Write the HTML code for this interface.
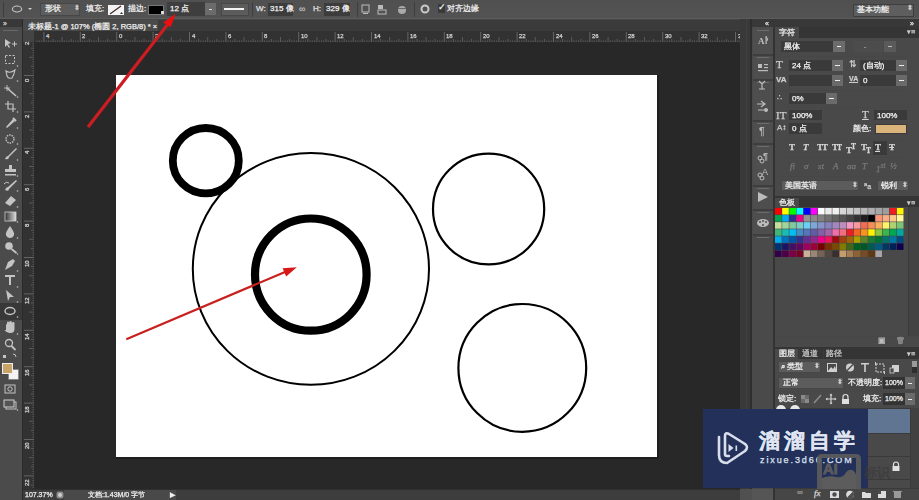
<!DOCTYPE html><html><head><meta charset="utf-8"><style>
*{margin:0;padding:0;box-sizing:border-box}
html,body{width:919px;height:500px;overflow:hidden;background:#282828;font-family:"Liberation Sans",sans-serif;color:#d8d8d8;font-size:8px}
.a{position:absolute}
.t{white-space:nowrap;line-height:1;-webkit-text-stroke:0.25px currentColor}
</style></head><body><div id="wrap" style="position:absolute;left:0;top:0;width:919px;height:500px;overflow:hidden;filter:blur(0.35px)">
<div class="a" style="left:0px;top:0px;width:919px;height:19px;background:linear-gradient(#505050,#535353);"></div>
<div class="a" style="left:0px;top:18px;width:919px;height:1px;background:#5c5c5c;"></div>
<div class="a" style="left:3px;top:2px;width:1px;height:15px;background:#3e3e3e;"></div>
<svg class="a" style="left:10px;top:4px" width="24" height="11"><ellipse cx="7" cy="5" rx="4.6" ry="3" fill="none" stroke="#c8c8c8" stroke-width="1.1"/><path d="M18 4 h4 l-2 2z" fill="#cfcfcf"/></svg>
<div class="a" style="left:40px;top:3px;width:40px;height:13px;background:#5d5d5d;border:1px solid #474747"></div>
<div class="a t" style="left:45px;top:5px;font-size:8px;color:#f0f0f0;">形状</div>
<div class="a t" style="left:74px;top:4px;font-size:7px;color:#cfcfcf;">&#x2B0D;</div>
<div class="a t" style="left:86px;top:5px;font-size:8px;color:#f0f0f0;">填充:</div>
<div class="a" style="left:108px;top:5px;width:16px;height:10px;background:#f4f4f4;"></div>
<svg class="a" style="left:108px;top:5px" width="16" height="10"><line x1="2" y1="9" x2="13" y2="1" stroke="#4a2a2a" stroke-width="1.2"/><path d="M12 9 h3 l-1.5 -2z" fill="#333"/></svg>
<div class="a t" style="left:128px;top:5px;font-size:8px;color:#f0f0f0;">描边:</div>
<div class="a" style="left:148px;top:5px;width:16px;height:10px;background:#000;border:1px solid #777"></div>
<div class="a" style="left:161px;top:11px;width:3px;height:3px;background:#ddd;"></div>
<div class="a" style="left:167px;top:2px;width:38px;height:14px;background:#3e3e3e;"></div>
<div class="a t" style="left:170px;top:5px;font-size:8px;color:#f4f4f4;">12 点</div>
<div class="a" style="left:205px;top:3px;width:11px;height:12px;background:#6b6b6b;"></div>
<div class="a" style="left:209px;top:9px;width:3px;height:1px;background:#ddd;"></div>
<div class="a" style="left:221px;top:3px;width:28px;height:13px;background:#5c5c5c;border:1px solid #474747"></div>
<div class="a" style="left:224px;top:8px;width:20px;height:2px;background:#f4f4f4;"></div>
<div class="a" style="left:252px;top:2px;width:1px;height:15px;background:#3e3e3e;"></div>
<div class="a t" style="left:256px;top:5px;font-size:8px;color:#e4e4e4;">W:</div>
<div class="a" style="left:268px;top:3px;width:25px;height:13px;background:#3c3c3c;"></div>
<div class="a t" style="left:270px;top:5px;font-size:8px;color:#f4f4f4;">315 像</div>
<div class="a t" style="left:299px;top:5px;font-size:9px;color:#bbbbbb;">&#x221E;</div>
<div class="a t" style="left:313px;top:5px;font-size:8px;color:#e4e4e4;">H:</div>
<div class="a" style="left:324px;top:3px;width:26px;height:13px;background:#3c3c3c;"></div>
<div class="a t" style="left:326px;top:5px;font-size:8px;color:#f4f4f4;">329 像</div>
<div class="a" style="left:357px;top:2px;width:1px;height:15px;background:#3e3e3e;"></div>
<svg class="a" style="left:360px;top:3px" width="50" height="14"><rect x="2" y="2" width="7" height="7" fill="none" stroke="#bbb"/><rect x="3" y="10" width="5" height="1" fill="#bbb"/><rect x="18" y="2" width="5" height="4" fill="#bbb"/><rect x="18" y="7" width="8" height="4" fill="none" stroke="#bbb"/><circle cx="42" cy="7" r="4" fill="#aaa"/><rect x="38" y="5" width="8" height="1" fill="#666"/></svg>
<div class="a" style="left:414px;top:2px;width:1px;height:15px;background:#3e3e3e;"></div>
<svg class="a" style="left:420px;top:4px" width="12" height="12"><circle cx="5" cy="5" r="3.5" fill="none" stroke="#c8c8c8" stroke-width="2"/></svg>
<div class="a" style="left:438px;top:4px;width:7px;height:9px;background:#3a3a3a;"></div>
<div class="a t" style="left:438px;top:3px;font-size:9px;color:#f0f0f0;">&#x2713;</div>
<div class="a t" style="left:447px;top:5px;font-size:8px;color:#f0f0f0;">对齐边缘</div>
<div class="a" style="left:853px;top:4px;width:61px;height:13px;background:#5e5e5e;border:1px solid #3e3e3e"></div>
<div class="a t" style="left:857px;top:6px;font-size:8px;color:#f4f4f4;">基本功能</div>
<div class="a t" style="left:907px;top:4px;font-size:7px;color:#cfcfcf;">&#x2B0D;</div>
<div class="a" style="left:0px;top:19px;width:22px;height:481px;background:#4b4b4b;"></div>
<div class="a" style="left:0px;top:19px;width:22px;height:8px;background:#383838;"></div>
<div class="a t" style="left:3px;top:20px;font-size:7px;color:#cfcfcf;">&#x00BB;</div>
<div class="a" style="left:3px;top:30px;width:15px;height:1px;background:#6a6a6a;"></div>
<div class="a" style="left:22px;top:19px;width:1px;height:481px;background:#2a2a2a;"></div>
<div class="a" style="left:0px;top:303px;width:22px;height:17px;background:#383838;"></div>
<svg class="a" style="left:0;top:0" width="22" height="420"><defs><linearGradient id="gr"><stop offset="0" stop-color="#333"/><stop offset="1" stop-color="#ddd"/></linearGradient></defs>
<path d="M5 39 l6 4 l-3 1 l2 3 l-1 1 l-2 -3 l-2 2z" fill="#c4c4c4"/><path d="M12 44 h5 M14.5 41.5 v5" stroke="#c4c4c4" fill="none" stroke-width="1"/>
<rect x="5.5" y="55.5" width="9" height="8" stroke="#c4c4c4" fill="none" stroke-dasharray="2 1.5"/><circle cx="17.5" cy="66" r="0.8" fill="#c4c4c4"/>
<path d="M6 71 q4 3 9 -1 q-1 5 -3 8 q-4 1 -5 -2 z" stroke="#c4c4c4" fill="none" stroke-width="1.1"/><circle cx="17.5" cy="81" r="0.8" fill="#c4c4c4"/>
<path d="M7 88 l9 8" stroke="#c4c4c4" fill="none" stroke-width="1.6"/><path d="M7 85 v6 M4 88 h6" stroke="#c4c4c4" fill="none" stroke-width="0.9"/><circle cx="17.5" cy="97" r="0.8" fill="#c4c4c4"/>
<path d="M8 101 v8 h8 M5 104 h8 v8" stroke="#c4c4c4" fill="none" stroke-width="1.2"/><circle cx="17.5" cy="112" r="0.8" fill="#c4c4c4"/>
<path d="M6 127 l7 -8 l2 2 l-8 7 z" fill="#c4c4c4"/><path d="M13 118 l3 3" stroke="#c4c4c4" fill="none" stroke-width="2"/><circle cx="17.5" cy="128" r="0.8" fill="#c4c4c4"/>
<circle cx="10" cy="139" r="4" stroke="#c4c4c4" fill="none" stroke-width="1.4" stroke-dasharray="1.5 1"/><circle cx="17.5" cy="144" r="0.8" fill="#c4c4c4"/>
<path d="M5 159 q1 -3 3 -3 l8 -8 l1 1 l-8 8 q0 3 -4 2z" fill="#c4c4c4"/><circle cx="17.5" cy="160" r="0.8" fill="#c4c4c4"/>
<path d="M9 165 h3 v4 h4 v3 h-11 v-3 h4z" fill="#c4c4c4"/><rect x="5" y="174" width="11" height="1.5" fill="#c4c4c4"/><circle cx="17.5" cy="176" r="0.8" fill="#c4c4c4"/>
<path d="M5 190 q1 -3 3 -3 l8 -7 l1 1 l-8 8 q0 3 -4 1z" fill="#c4c4c4"/><path d="M4 184 q2 -3 5 -1" stroke="#c4c4c4" fill="none"/><circle cx="17.5" cy="191" r="0.8" fill="#c4c4c4"/>
<path d="M5 203 l6 -7 l5 4 l-6 6 z" fill="#c4c4c4"/><circle cx="17.5" cy="207" r="0.8" fill="#c4c4c4"/>
<rect x="5" y="212" width="11" height="9" fill="url(#gr)" stroke="#cfcfcf" stroke-width="0.8"/><circle cx="17.5" cy="222" r="0.8" fill="#c4c4c4"/>
<path d="M10 226 q-5 7 -4 9 q1 3 4 3 q3 0 4 -3 q1 -2 -4 -9z" fill="#c4c4c4"/><circle cx="17.5" cy="238" r="0.8" fill="#c4c4c4"/>
<circle cx="9" cy="246" r="3.8" fill="#c4c4c4"/><path d="M11.5 249 l5 4" stroke="#c4c4c4" fill="none" stroke-width="1.8"/><circle cx="17.5" cy="254" r="0.8" fill="#c4c4c4"/>
<path d="M5 270 l3 -8 l5 -3 l2 2 l-3 5 z" fill="#c4c4c4"/><circle cx="17.5" cy="271" r="0.8" fill="#c4c4c4"/>
<path d="M5 275 h10 v2 h-4 v8 h-2 v-8 h-4z" fill="#c4c4c4"/><circle cx="17.5" cy="287" r="0.8" fill="#c4c4c4"/>
<path d="M6 290 l8 7 l-4 0 l-2 4 z" fill="#c4c4c4"/><circle cx="17.5" cy="302" r="0.8" fill="#c4c4c4"/>
<ellipse cx="10" cy="311" rx="5" ry="3.5" stroke="#c4c4c4" fill="none" stroke-width="1.4"/><circle cx="17.5" cy="317" r="0.8" fill="#c4c4c4"/>
<path d="M6 330 v-5 q0 -1 1 -1 v-2 q1 -1 2 0 v1 q0 -2 1.5 -2 q1.5 0 1.5 2 q0 -1 1.5 -1 q1 0 1 1 v6 q0 4 -4 4 h-1 q-3 0 -5 -3z" fill="#c4c4c4"/><circle cx="17.5" cy="334" r="0.8" fill="#c4c4c4"/>
<circle cx="9" cy="343" r="3.5" stroke="#c4c4c4" fill="none" stroke-width="1.3"/><path d="M11.5 346 l4 4" stroke="#c4c4c4" fill="none" stroke-width="1.8"/>
<rect x="3" y="355" width="3" height="3" fill="#c4c4c4"/><path d="M13 354 q3 0 3 3" stroke="#c4c4c4" fill="none"/>
<rect x="8.5" y="369.5" width="10" height="10" fill="#f4f4f4" stroke="#777" stroke-width="0.6"/>
<rect x="2.5" y="363.5" width="10" height="10" fill="#c9a468" stroke="#eee" stroke-width="1"/>
<rect x="5" y="385" width="10" height="8" stroke="#c4c4c4" fill="none"/><circle cx="10" cy="389" r="2.2" stroke="#c4c4c4" fill="none"/>
<rect x="6" y="402" width="10" height="7" stroke="#c4c4c4" fill="none"/><rect x="4" y="400" width="10" height="7" fill="#535353" stroke="#cfcfcf"/><circle cx="17.5" cy="410" r="0.8" fill="#c4c4c4"/>
</svg>
<div class="a" style="left:23px;top:19px;width:717px;height:12px;background:#3b3b3b;"></div>
<div class="a" style="left:23px;top:19px;width:717px;height:1px;background:#464646;"></div>
<div class="a" style="left:23px;top:20px;width:135px;height:11px;background:#4a4a4a;"></div>
<div class="a t" style="left:28px;top:23px;font-size:7.5px;color:#f0f0f0;">未标题-1 @ 107% (椭圆 2, RGB/8) * &#xD7;</div>
<div class="a" style="left:23px;top:31px;width:717px;height:11px;background:#323232;"></div>
<div class="a" style="left:23px;top:42px;width:717px;height:1px;background:#2a2a2a;"></div>
<div class="a" style="left:23px;top:31px;width:11px;height:458px;background:#323232;"></div>
<div class="a" style="left:34px;top:42px;width:1px;height:447px;background:#2a2a2a;"></div>
<div class="a" style="left:23px;top:31px;width:11px;height:11px;background:#444444;"></div>
<svg class="a" style="left:0;top:31px" width="740" height="11"><rect x="36.58" y="9.5" width="1" height="1.5" fill="#5a5a5a"/><rect x="38.85" y="9.5" width="1" height="1.5" fill="#5a5a5a"/><rect x="41.12" y="9.5" width="1" height="1.5" fill="#5a5a5a"/><rect x="43.40" y="1" width="1" height="10" fill="#646464"/><rect x="45.68" y="9.5" width="1" height="1.5" fill="#5a5a5a"/><rect x="47.95" y="9.5" width="1" height="1.5" fill="#5a5a5a"/><rect x="50.23" y="9.5" width="1" height="1.5" fill="#5a5a5a"/><rect x="52.50" y="8" width="1" height="3" fill="#5a5a5a"/><rect x="54.78" y="9.5" width="1" height="1.5" fill="#5a5a5a"/><rect x="57.05" y="9.5" width="1" height="1.5" fill="#5a5a5a"/><rect x="59.33" y="9.5" width="1" height="1.5" fill="#5a5a5a"/><rect x="61.60" y="6" width="1" height="5" fill="#5a5a5a"/><rect x="63.88" y="9.5" width="1" height="1.5" fill="#5a5a5a"/><rect x="66.15" y="9.5" width="1" height="1.5" fill="#5a5a5a"/><rect x="68.43" y="9.5" width="1" height="1.5" fill="#5a5a5a"/><rect x="70.70" y="8" width="1" height="3" fill="#5a5a5a"/><rect x="72.97" y="9.5" width="1" height="1.5" fill="#5a5a5a"/><rect x="75.25" y="9.5" width="1" height="1.5" fill="#5a5a5a"/><rect x="77.53" y="9.5" width="1" height="1.5" fill="#5a5a5a"/><rect x="79.80" y="1" width="1" height="10" fill="#646464"/><rect x="82.08" y="9.5" width="1" height="1.5" fill="#5a5a5a"/><rect x="84.35" y="9.5" width="1" height="1.5" fill="#5a5a5a"/><rect x="86.62" y="9.5" width="1" height="1.5" fill="#5a5a5a"/><rect x="88.90" y="8" width="1" height="3" fill="#5a5a5a"/><rect x="91.18" y="9.5" width="1" height="1.5" fill="#5a5a5a"/><rect x="93.45" y="9.5" width="1" height="1.5" fill="#5a5a5a"/><rect x="95.73" y="9.5" width="1" height="1.5" fill="#5a5a5a"/><rect x="98.00" y="6" width="1" height="5" fill="#5a5a5a"/><rect x="100.28" y="9.5" width="1" height="1.5" fill="#5a5a5a"/><rect x="102.55" y="9.5" width="1" height="1.5" fill="#5a5a5a"/><rect x="104.83" y="9.5" width="1" height="1.5" fill="#5a5a5a"/><rect x="107.10" y="8" width="1" height="3" fill="#5a5a5a"/><rect x="109.38" y="9.5" width="1" height="1.5" fill="#5a5a5a"/><rect x="111.65" y="9.5" width="1" height="1.5" fill="#5a5a5a"/><rect x="113.92" y="9.5" width="1" height="1.5" fill="#5a5a5a"/><rect x="116.20" y="1" width="1" height="10" fill="#646464"/><rect x="118.48" y="9.5" width="1" height="1.5" fill="#5a5a5a"/><rect x="120.75" y="9.5" width="1" height="1.5" fill="#5a5a5a"/><rect x="123.03" y="9.5" width="1" height="1.5" fill="#5a5a5a"/><rect x="125.30" y="8" width="1" height="3" fill="#5a5a5a"/><rect x="127.58" y="9.5" width="1" height="1.5" fill="#5a5a5a"/><rect x="129.85" y="9.5" width="1" height="1.5" fill="#5a5a5a"/><rect x="132.12" y="9.5" width="1" height="1.5" fill="#5a5a5a"/><rect x="134.40" y="6" width="1" height="5" fill="#5a5a5a"/><rect x="136.68" y="9.5" width="1" height="1.5" fill="#5a5a5a"/><rect x="138.95" y="9.5" width="1" height="1.5" fill="#5a5a5a"/><rect x="141.22" y="9.5" width="1" height="1.5" fill="#5a5a5a"/><rect x="143.50" y="8" width="1" height="3" fill="#5a5a5a"/><rect x="145.78" y="9.5" width="1" height="1.5" fill="#5a5a5a"/><rect x="148.05" y="9.5" width="1" height="1.5" fill="#5a5a5a"/><rect x="150.32" y="9.5" width="1" height="1.5" fill="#5a5a5a"/><rect x="152.60" y="1" width="1" height="10" fill="#646464"/><rect x="154.88" y="9.5" width="1" height="1.5" fill="#5a5a5a"/><rect x="157.15" y="9.5" width="1" height="1.5" fill="#5a5a5a"/><rect x="159.43" y="9.5" width="1" height="1.5" fill="#5a5a5a"/><rect x="161.70" y="8" width="1" height="3" fill="#5a5a5a"/><rect x="163.97" y="9.5" width="1" height="1.5" fill="#5a5a5a"/><rect x="166.25" y="9.5" width="1" height="1.5" fill="#5a5a5a"/><rect x="168.53" y="9.5" width="1" height="1.5" fill="#5a5a5a"/><rect x="170.80" y="6" width="1" height="5" fill="#5a5a5a"/><rect x="173.07" y="9.5" width="1" height="1.5" fill="#5a5a5a"/><rect x="175.35" y="9.5" width="1" height="1.5" fill="#5a5a5a"/><rect x="177.62" y="9.5" width="1" height="1.5" fill="#5a5a5a"/><rect x="179.90" y="8" width="1" height="3" fill="#5a5a5a"/><rect x="182.18" y="9.5" width="1" height="1.5" fill="#5a5a5a"/><rect x="184.45" y="9.5" width="1" height="1.5" fill="#5a5a5a"/><rect x="186.72" y="9.5" width="1" height="1.5" fill="#5a5a5a"/><rect x="189.00" y="1" width="1" height="10" fill="#646464"/><rect x="191.28" y="9.5" width="1" height="1.5" fill="#5a5a5a"/><rect x="193.55" y="9.5" width="1" height="1.5" fill="#5a5a5a"/><rect x="195.82" y="9.5" width="1" height="1.5" fill="#5a5a5a"/><rect x="198.10" y="8" width="1" height="3" fill="#5a5a5a"/><rect x="200.38" y="9.5" width="1" height="1.5" fill="#5a5a5a"/><rect x="202.65" y="9.5" width="1" height="1.5" fill="#5a5a5a"/><rect x="204.93" y="9.5" width="1" height="1.5" fill="#5a5a5a"/><rect x="207.20" y="6" width="1" height="5" fill="#5a5a5a"/><rect x="209.47" y="9.5" width="1" height="1.5" fill="#5a5a5a"/><rect x="211.75" y="9.5" width="1" height="1.5" fill="#5a5a5a"/><rect x="214.03" y="9.5" width="1" height="1.5" fill="#5a5a5a"/><rect x="216.30" y="8" width="1" height="3" fill="#5a5a5a"/><rect x="218.57" y="9.5" width="1" height="1.5" fill="#5a5a5a"/><rect x="220.85" y="9.5" width="1" height="1.5" fill="#5a5a5a"/><rect x="223.12" y="9.5" width="1" height="1.5" fill="#5a5a5a"/><rect x="225.40" y="1" width="1" height="10" fill="#646464"/><rect x="227.68" y="9.5" width="1" height="1.5" fill="#5a5a5a"/><rect x="229.95" y="9.5" width="1" height="1.5" fill="#5a5a5a"/><rect x="232.22" y="9.5" width="1" height="1.5" fill="#5a5a5a"/><rect x="234.50" y="8" width="1" height="3" fill="#5a5a5a"/><rect x="236.77" y="9.5" width="1" height="1.5" fill="#5a5a5a"/><rect x="239.05" y="9.5" width="1" height="1.5" fill="#5a5a5a"/><rect x="241.32" y="9.5" width="1" height="1.5" fill="#5a5a5a"/><rect x="243.60" y="6" width="1" height="5" fill="#5a5a5a"/><rect x="245.88" y="9.5" width="1" height="1.5" fill="#5a5a5a"/><rect x="248.15" y="9.5" width="1" height="1.5" fill="#5a5a5a"/><rect x="250.43" y="9.5" width="1" height="1.5" fill="#5a5a5a"/><rect x="252.70" y="8" width="1" height="3" fill="#5a5a5a"/><rect x="254.98" y="9.5" width="1" height="1.5" fill="#5a5a5a"/><rect x="257.25" y="9.5" width="1" height="1.5" fill="#5a5a5a"/><rect x="259.52" y="9.5" width="1" height="1.5" fill="#5a5a5a"/><rect x="261.80" y="1" width="1" height="10" fill="#646464"/><rect x="264.07" y="9.5" width="1" height="1.5" fill="#5a5a5a"/><rect x="266.35" y="9.5" width="1" height="1.5" fill="#5a5a5a"/><rect x="268.62" y="9.5" width="1" height="1.5" fill="#5a5a5a"/><rect x="270.90" y="8" width="1" height="3" fill="#5a5a5a"/><rect x="273.18" y="9.5" width="1" height="1.5" fill="#5a5a5a"/><rect x="275.45" y="9.5" width="1" height="1.5" fill="#5a5a5a"/><rect x="277.73" y="9.5" width="1" height="1.5" fill="#5a5a5a"/><rect x="280.00" y="6" width="1" height="5" fill="#5a5a5a"/><rect x="282.27" y="9.5" width="1" height="1.5" fill="#5a5a5a"/><rect x="284.55" y="9.5" width="1" height="1.5" fill="#5a5a5a"/><rect x="286.82" y="9.5" width="1" height="1.5" fill="#5a5a5a"/><rect x="289.10" y="8" width="1" height="3" fill="#5a5a5a"/><rect x="291.38" y="9.5" width="1" height="1.5" fill="#5a5a5a"/><rect x="293.65" y="9.5" width="1" height="1.5" fill="#5a5a5a"/><rect x="295.93" y="9.5" width="1" height="1.5" fill="#5a5a5a"/><rect x="298.20" y="1" width="1" height="10" fill="#646464"/><rect x="300.48" y="9.5" width="1" height="1.5" fill="#5a5a5a"/><rect x="302.75" y="9.5" width="1" height="1.5" fill="#5a5a5a"/><rect x="305.02" y="9.5" width="1" height="1.5" fill="#5a5a5a"/><rect x="307.30" y="8" width="1" height="3" fill="#5a5a5a"/><rect x="309.57" y="9.5" width="1" height="1.5" fill="#5a5a5a"/><rect x="311.85" y="9.5" width="1" height="1.5" fill="#5a5a5a"/><rect x="314.12" y="9.5" width="1" height="1.5" fill="#5a5a5a"/><rect x="316.40" y="6" width="1" height="5" fill="#5a5a5a"/><rect x="318.68" y="9.5" width="1" height="1.5" fill="#5a5a5a"/><rect x="320.95" y="9.5" width="1" height="1.5" fill="#5a5a5a"/><rect x="323.23" y="9.5" width="1" height="1.5" fill="#5a5a5a"/><rect x="325.50" y="8" width="1" height="3" fill="#5a5a5a"/><rect x="327.77" y="9.5" width="1" height="1.5" fill="#5a5a5a"/><rect x="330.05" y="9.5" width="1" height="1.5" fill="#5a5a5a"/><rect x="332.32" y="9.5" width="1" height="1.5" fill="#5a5a5a"/><rect x="334.60" y="1" width="1" height="10" fill="#646464"/><rect x="336.88" y="9.5" width="1" height="1.5" fill="#5a5a5a"/><rect x="339.15" y="9.5" width="1" height="1.5" fill="#5a5a5a"/><rect x="341.43" y="9.5" width="1" height="1.5" fill="#5a5a5a"/><rect x="343.70" y="8" width="1" height="3" fill="#5a5a5a"/><rect x="345.97" y="9.5" width="1" height="1.5" fill="#5a5a5a"/><rect x="348.25" y="9.5" width="1" height="1.5" fill="#5a5a5a"/><rect x="350.52" y="9.5" width="1" height="1.5" fill="#5a5a5a"/><rect x="352.80" y="6" width="1" height="5" fill="#5a5a5a"/><rect x="355.07" y="9.5" width="1" height="1.5" fill="#5a5a5a"/><rect x="357.35" y="9.5" width="1" height="1.5" fill="#5a5a5a"/><rect x="359.62" y="9.5" width="1" height="1.5" fill="#5a5a5a"/><rect x="361.90" y="8" width="1" height="3" fill="#5a5a5a"/><rect x="364.18" y="9.5" width="1" height="1.5" fill="#5a5a5a"/><rect x="366.45" y="9.5" width="1" height="1.5" fill="#5a5a5a"/><rect x="368.72" y="9.5" width="1" height="1.5" fill="#5a5a5a"/><rect x="371.00" y="1" width="1" height="10" fill="#646464"/><rect x="373.27" y="9.5" width="1" height="1.5" fill="#5a5a5a"/><rect x="375.55" y="9.5" width="1" height="1.5" fill="#5a5a5a"/><rect x="377.82" y="9.5" width="1" height="1.5" fill="#5a5a5a"/><rect x="380.10" y="8" width="1" height="3" fill="#5a5a5a"/><rect x="382.38" y="9.5" width="1" height="1.5" fill="#5a5a5a"/><rect x="384.65" y="9.5" width="1" height="1.5" fill="#5a5a5a"/><rect x="386.92" y="9.5" width="1" height="1.5" fill="#5a5a5a"/><rect x="389.20" y="6" width="1" height="5" fill="#5a5a5a"/><rect x="391.47" y="9.5" width="1" height="1.5" fill="#5a5a5a"/><rect x="393.75" y="9.5" width="1" height="1.5" fill="#5a5a5a"/><rect x="396.02" y="9.5" width="1" height="1.5" fill="#5a5a5a"/><rect x="398.30" y="8" width="1" height="3" fill="#5a5a5a"/><rect x="400.57" y="9.5" width="1" height="1.5" fill="#5a5a5a"/><rect x="402.85" y="9.5" width="1" height="1.5" fill="#5a5a5a"/><rect x="405.12" y="9.5" width="1" height="1.5" fill="#5a5a5a"/><rect x="407.40" y="1" width="1" height="10" fill="#646464"/><rect x="409.67" y="9.5" width="1" height="1.5" fill="#5a5a5a"/><rect x="411.95" y="9.5" width="1" height="1.5" fill="#5a5a5a"/><rect x="414.22" y="9.5" width="1" height="1.5" fill="#5a5a5a"/><rect x="416.50" y="8" width="1" height="3" fill="#5a5a5a"/><rect x="418.77" y="9.5" width="1" height="1.5" fill="#5a5a5a"/><rect x="421.05" y="9.5" width="1" height="1.5" fill="#5a5a5a"/><rect x="423.32" y="9.5" width="1" height="1.5" fill="#5a5a5a"/><rect x="425.60" y="6" width="1" height="5" fill="#5a5a5a"/><rect x="427.88" y="9.5" width="1" height="1.5" fill="#5a5a5a"/><rect x="430.15" y="9.5" width="1" height="1.5" fill="#5a5a5a"/><rect x="432.42" y="9.5" width="1" height="1.5" fill="#5a5a5a"/><rect x="434.70" y="8" width="1" height="3" fill="#5a5a5a"/><rect x="436.97" y="9.5" width="1" height="1.5" fill="#5a5a5a"/><rect x="439.25" y="9.5" width="1" height="1.5" fill="#5a5a5a"/><rect x="441.52" y="9.5" width="1" height="1.5" fill="#5a5a5a"/><rect x="443.80" y="1" width="1" height="10" fill="#646464"/><rect x="446.07" y="9.5" width="1" height="1.5" fill="#5a5a5a"/><rect x="448.35" y="9.5" width="1" height="1.5" fill="#5a5a5a"/><rect x="450.62" y="9.5" width="1" height="1.5" fill="#5a5a5a"/><rect x="452.90" y="8" width="1" height="3" fill="#5a5a5a"/><rect x="455.17" y="9.5" width="1" height="1.5" fill="#5a5a5a"/><rect x="457.45" y="9.5" width="1" height="1.5" fill="#5a5a5a"/><rect x="459.72" y="9.5" width="1" height="1.5" fill="#5a5a5a"/><rect x="462.00" y="6" width="1" height="5" fill="#5a5a5a"/><rect x="464.27" y="9.5" width="1" height="1.5" fill="#5a5a5a"/><rect x="466.55" y="9.5" width="1" height="1.5" fill="#5a5a5a"/><rect x="468.82" y="9.5" width="1" height="1.5" fill="#5a5a5a"/><rect x="471.10" y="8" width="1" height="3" fill="#5a5a5a"/><rect x="473.38" y="9.5" width="1" height="1.5" fill="#5a5a5a"/><rect x="475.65" y="9.5" width="1" height="1.5" fill="#5a5a5a"/><rect x="477.92" y="9.5" width="1" height="1.5" fill="#5a5a5a"/><rect x="480.20" y="1" width="1" height="10" fill="#646464"/><rect x="482.47" y="9.5" width="1" height="1.5" fill="#5a5a5a"/><rect x="484.75" y="9.5" width="1" height="1.5" fill="#5a5a5a"/><rect x="487.02" y="9.5" width="1" height="1.5" fill="#5a5a5a"/><rect x="489.30" y="8" width="1" height="3" fill="#5a5a5a"/><rect x="491.57" y="9.5" width="1" height="1.5" fill="#5a5a5a"/><rect x="493.85" y="9.5" width="1" height="1.5" fill="#5a5a5a"/><rect x="496.12" y="9.5" width="1" height="1.5" fill="#5a5a5a"/><rect x="498.40" y="6" width="1" height="5" fill="#5a5a5a"/><rect x="500.67" y="9.5" width="1" height="1.5" fill="#5a5a5a"/><rect x="502.95" y="9.5" width="1" height="1.5" fill="#5a5a5a"/><rect x="505.22" y="9.5" width="1" height="1.5" fill="#5a5a5a"/><rect x="507.50" y="8" width="1" height="3" fill="#5a5a5a"/><rect x="509.77" y="9.5" width="1" height="1.5" fill="#5a5a5a"/><rect x="512.05" y="9.5" width="1" height="1.5" fill="#5a5a5a"/><rect x="514.33" y="9.5" width="1" height="1.5" fill="#5a5a5a"/><rect x="516.60" y="1" width="1" height="10" fill="#646464"/><rect x="518.88" y="9.5" width="1" height="1.5" fill="#5a5a5a"/><rect x="521.15" y="9.5" width="1" height="1.5" fill="#5a5a5a"/><rect x="523.42" y="9.5" width="1" height="1.5" fill="#5a5a5a"/><rect x="525.70" y="8" width="1" height="3" fill="#5a5a5a"/><rect x="527.98" y="9.5" width="1" height="1.5" fill="#5a5a5a"/><rect x="530.25" y="9.5" width="1" height="1.5" fill="#5a5a5a"/><rect x="532.52" y="9.5" width="1" height="1.5" fill="#5a5a5a"/><rect x="534.80" y="6" width="1" height="5" fill="#5a5a5a"/><rect x="537.08" y="9.5" width="1" height="1.5" fill="#5a5a5a"/><rect x="539.35" y="9.5" width="1" height="1.5" fill="#5a5a5a"/><rect x="541.62" y="9.5" width="1" height="1.5" fill="#5a5a5a"/><rect x="543.90" y="8" width="1" height="3" fill="#5a5a5a"/><rect x="546.17" y="9.5" width="1" height="1.5" fill="#5a5a5a"/><rect x="548.45" y="9.5" width="1" height="1.5" fill="#5a5a5a"/><rect x="550.73" y="9.5" width="1" height="1.5" fill="#5a5a5a"/><rect x="553.00" y="1" width="1" height="10" fill="#646464"/><rect x="555.27" y="9.5" width="1" height="1.5" fill="#5a5a5a"/><rect x="557.55" y="9.5" width="1" height="1.5" fill="#5a5a5a"/><rect x="559.83" y="9.5" width="1" height="1.5" fill="#5a5a5a"/><rect x="562.10" y="8" width="1" height="3" fill="#5a5a5a"/><rect x="564.38" y="9.5" width="1" height="1.5" fill="#5a5a5a"/><rect x="566.65" y="9.5" width="1" height="1.5" fill="#5a5a5a"/><rect x="568.92" y="9.5" width="1" height="1.5" fill="#5a5a5a"/><rect x="571.20" y="6" width="1" height="5" fill="#5a5a5a"/><rect x="573.48" y="9.5" width="1" height="1.5" fill="#5a5a5a"/><rect x="575.75" y="9.5" width="1" height="1.5" fill="#5a5a5a"/><rect x="578.02" y="9.5" width="1" height="1.5" fill="#5a5a5a"/><rect x="580.30" y="8" width="1" height="3" fill="#5a5a5a"/><rect x="582.58" y="9.5" width="1" height="1.5" fill="#5a5a5a"/><rect x="584.85" y="9.5" width="1" height="1.5" fill="#5a5a5a"/><rect x="587.12" y="9.5" width="1" height="1.5" fill="#5a5a5a"/><rect x="589.40" y="1" width="1" height="10" fill="#646464"/><rect x="591.67" y="9.5" width="1" height="1.5" fill="#5a5a5a"/><rect x="593.95" y="9.5" width="1" height="1.5" fill="#5a5a5a"/><rect x="596.23" y="9.5" width="1" height="1.5" fill="#5a5a5a"/><rect x="598.50" y="8" width="1" height="3" fill="#5a5a5a"/><rect x="600.77" y="9.5" width="1" height="1.5" fill="#5a5a5a"/><rect x="603.05" y="9.5" width="1" height="1.5" fill="#5a5a5a"/><rect x="605.33" y="9.5" width="1" height="1.5" fill="#5a5a5a"/><rect x="607.60" y="6" width="1" height="5" fill="#5a5a5a"/><rect x="609.88" y="9.5" width="1" height="1.5" fill="#5a5a5a"/><rect x="612.15" y="9.5" width="1" height="1.5" fill="#5a5a5a"/><rect x="614.42" y="9.5" width="1" height="1.5" fill="#5a5a5a"/><rect x="616.70" y="8" width="1" height="3" fill="#5a5a5a"/><rect x="618.98" y="9.5" width="1" height="1.5" fill="#5a5a5a"/><rect x="621.25" y="9.5" width="1" height="1.5" fill="#5a5a5a"/><rect x="623.52" y="9.5" width="1" height="1.5" fill="#5a5a5a"/><rect x="625.80" y="1" width="1" height="10" fill="#646464"/><rect x="628.08" y="9.5" width="1" height="1.5" fill="#5a5a5a"/><rect x="630.35" y="9.5" width="1" height="1.5" fill="#5a5a5a"/><rect x="632.62" y="9.5" width="1" height="1.5" fill="#5a5a5a"/><rect x="634.90" y="8" width="1" height="3" fill="#5a5a5a"/><rect x="637.18" y="9.5" width="1" height="1.5" fill="#5a5a5a"/><rect x="639.45" y="9.5" width="1" height="1.5" fill="#5a5a5a"/><rect x="641.73" y="9.5" width="1" height="1.5" fill="#5a5a5a"/><rect x="644.00" y="6" width="1" height="5" fill="#5a5a5a"/><rect x="646.27" y="9.5" width="1" height="1.5" fill="#5a5a5a"/><rect x="648.55" y="9.5" width="1" height="1.5" fill="#5a5a5a"/><rect x="650.83" y="9.5" width="1" height="1.5" fill="#5a5a5a"/><rect x="653.10" y="8" width="1" height="3" fill="#5a5a5a"/><rect x="655.38" y="9.5" width="1" height="1.5" fill="#5a5a5a"/><rect x="657.65" y="9.5" width="1" height="1.5" fill="#5a5a5a"/><rect x="659.93" y="9.5" width="1" height="1.5" fill="#5a5a5a"/><rect x="662.20" y="1" width="1" height="10" fill="#646464"/><rect x="664.48" y="9.5" width="1" height="1.5" fill="#5a5a5a"/><rect x="666.75" y="9.5" width="1" height="1.5" fill="#5a5a5a"/><rect x="669.02" y="9.5" width="1" height="1.5" fill="#5a5a5a"/><rect x="671.30" y="8" width="1" height="3" fill="#5a5a5a"/><rect x="673.58" y="9.5" width="1" height="1.5" fill="#5a5a5a"/><rect x="675.85" y="9.5" width="1" height="1.5" fill="#5a5a5a"/><rect x="678.12" y="9.5" width="1" height="1.5" fill="#5a5a5a"/><rect x="680.40" y="6" width="1" height="5" fill="#5a5a5a"/><rect x="682.68" y="9.5" width="1" height="1.5" fill="#5a5a5a"/><rect x="684.95" y="9.5" width="1" height="1.5" fill="#5a5a5a"/><rect x="687.23" y="9.5" width="1" height="1.5" fill="#5a5a5a"/><rect x="689.50" y="8" width="1" height="3" fill="#5a5a5a"/><rect x="691.77" y="9.5" width="1" height="1.5" fill="#5a5a5a"/><rect x="694.05" y="9.5" width="1" height="1.5" fill="#5a5a5a"/><rect x="696.33" y="9.5" width="1" height="1.5" fill="#5a5a5a"/><rect x="698.60" y="1" width="1" height="10" fill="#646464"/><rect x="700.88" y="9.5" width="1" height="1.5" fill="#5a5a5a"/><rect x="703.15" y="9.5" width="1" height="1.5" fill="#5a5a5a"/><rect x="705.43" y="9.5" width="1" height="1.5" fill="#5a5a5a"/><rect x="707.70" y="8" width="1" height="3" fill="#5a5a5a"/><rect x="709.98" y="9.5" width="1" height="1.5" fill="#5a5a5a"/><rect x="712.25" y="9.5" width="1" height="1.5" fill="#5a5a5a"/><rect x="714.52" y="9.5" width="1" height="1.5" fill="#5a5a5a"/><rect x="716.80" y="6" width="1" height="5" fill="#5a5a5a"/><rect x="719.08" y="9.5" width="1" height="1.5" fill="#5a5a5a"/><rect x="721.35" y="9.5" width="1" height="1.5" fill="#5a5a5a"/><rect x="723.62" y="9.5" width="1" height="1.5" fill="#5a5a5a"/><rect x="725.90" y="8" width="1" height="3" fill="#5a5a5a"/><rect x="728.18" y="9.5" width="1" height="1.5" fill="#5a5a5a"/><rect x="730.45" y="9.5" width="1" height="1.5" fill="#5a5a5a"/><rect x="732.73" y="9.5" width="1" height="1.5" fill="#5a5a5a"/><rect x="735.00" y="1" width="1" height="10" fill="#646464"/><rect x="737.27" y="9.5" width="1" height="1.5" fill="#5a5a5a"/><rect x="739.55" y="9.5" width="1" height="1.5" fill="#5a5a5a"/></svg>
<div class="a t" style="left:46px;top:33px;font-size:6px;color:#d4d4d4;">4</div>
<div class="a t" style="left:82px;top:33px;font-size:6px;color:#d4d4d4;">2</div>
<div class="a t" style="left:119px;top:33px;font-size:6px;color:#d4d4d4;">0</div>
<div class="a t" style="left:155px;top:33px;font-size:6px;color:#d4d4d4;">2</div>
<div class="a t" style="left:192px;top:33px;font-size:6px;color:#d4d4d4;">4</div>
<div class="a t" style="left:228px;top:33px;font-size:6px;color:#d4d4d4;">6</div>
<div class="a t" style="left:264px;top:33px;font-size:6px;color:#d4d4d4;">8</div>
<div class="a t" style="left:301px;top:33px;font-size:6px;color:#d4d4d4;">10</div>
<div class="a t" style="left:337px;top:33px;font-size:6px;color:#d4d4d4;">12</div>
<div class="a t" style="left:374px;top:33px;font-size:6px;color:#d4d4d4;">14</div>
<div class="a t" style="left:410px;top:33px;font-size:6px;color:#d4d4d4;">16</div>
<div class="a t" style="left:446px;top:33px;font-size:6px;color:#d4d4d4;">18</div>
<div class="a t" style="left:483px;top:33px;font-size:6px;color:#d4d4d4;">20</div>
<div class="a t" style="left:519px;top:33px;font-size:6px;color:#d4d4d4;">22</div>
<div class="a t" style="left:556px;top:33px;font-size:6px;color:#d4d4d4;">24</div>
<div class="a t" style="left:592px;top:33px;font-size:6px;color:#d4d4d4;">26</div>
<div class="a t" style="left:628px;top:33px;font-size:6px;color:#d4d4d4;">28</div>
<div class="a t" style="left:665px;top:33px;font-size:6px;color:#d4d4d4;">30</div>
<div class="a t" style="left:701px;top:33px;font-size:6px;color:#d4d4d4;">32</div>
<div class="a t" style="left:738px;top:33px;font-size:6px;color:#d4d4d4;">34</div>
<svg class="a" style="left:23px;top:0" width="11" height="489"><rect x="9.5" y="43.15" width="1.5" height="1" fill="#5a5a5a"/><rect x="9.5" y="45.42" width="1.5" height="1" fill="#5a5a5a"/><rect x="8" y="47.70" width="3" height="1" fill="#5a5a5a"/><rect x="9.5" y="49.98" width="1.5" height="1" fill="#5a5a5a"/><rect x="9.5" y="52.25" width="1.5" height="1" fill="#5a5a5a"/><rect x="9.5" y="54.53" width="1.5" height="1" fill="#5a5a5a"/><rect x="6" y="56.80" width="5" height="1" fill="#5a5a5a"/><rect x="9.5" y="59.08" width="1.5" height="1" fill="#5a5a5a"/><rect x="9.5" y="61.35" width="1.5" height="1" fill="#5a5a5a"/><rect x="9.5" y="63.62" width="1.5" height="1" fill="#5a5a5a"/><rect x="8" y="65.90" width="3" height="1" fill="#5a5a5a"/><rect x="9.5" y="68.17" width="1.5" height="1" fill="#5a5a5a"/><rect x="9.5" y="70.45" width="1.5" height="1" fill="#5a5a5a"/><rect x="9.5" y="72.72" width="1.5" height="1" fill="#5a5a5a"/><rect x="1" y="75.00" width="10" height="1" fill="#646464"/><rect x="9.5" y="77.28" width="1.5" height="1" fill="#5a5a5a"/><rect x="9.5" y="79.55" width="1.5" height="1" fill="#5a5a5a"/><rect x="9.5" y="81.83" width="1.5" height="1" fill="#5a5a5a"/><rect x="8" y="84.10" width="3" height="1" fill="#5a5a5a"/><rect x="9.5" y="86.38" width="1.5" height="1" fill="#5a5a5a"/><rect x="9.5" y="88.65" width="1.5" height="1" fill="#5a5a5a"/><rect x="9.5" y="90.92" width="1.5" height="1" fill="#5a5a5a"/><rect x="6" y="93.20" width="5" height="1" fill="#5a5a5a"/><rect x="9.5" y="95.47" width="1.5" height="1" fill="#5a5a5a"/><rect x="9.5" y="97.75" width="1.5" height="1" fill="#5a5a5a"/><rect x="9.5" y="100.03" width="1.5" height="1" fill="#5a5a5a"/><rect x="8" y="102.30" width="3" height="1" fill="#5a5a5a"/><rect x="9.5" y="104.58" width="1.5" height="1" fill="#5a5a5a"/><rect x="9.5" y="106.85" width="1.5" height="1" fill="#5a5a5a"/><rect x="9.5" y="109.12" width="1.5" height="1" fill="#5a5a5a"/><rect x="1" y="111.40" width="10" height="1" fill="#646464"/><rect x="9.5" y="113.67" width="1.5" height="1" fill="#5a5a5a"/><rect x="9.5" y="115.95" width="1.5" height="1" fill="#5a5a5a"/><rect x="9.5" y="118.22" width="1.5" height="1" fill="#5a5a5a"/><rect x="8" y="120.50" width="3" height="1" fill="#5a5a5a"/><rect x="9.5" y="122.78" width="1.5" height="1" fill="#5a5a5a"/><rect x="9.5" y="125.05" width="1.5" height="1" fill="#5a5a5a"/><rect x="9.5" y="127.32" width="1.5" height="1" fill="#5a5a5a"/><rect x="6" y="129.60" width="5" height="1" fill="#5a5a5a"/><rect x="9.5" y="131.88" width="1.5" height="1" fill="#5a5a5a"/><rect x="9.5" y="134.15" width="1.5" height="1" fill="#5a5a5a"/><rect x="9.5" y="136.43" width="1.5" height="1" fill="#5a5a5a"/><rect x="8" y="138.70" width="3" height="1" fill="#5a5a5a"/><rect x="9.5" y="140.97" width="1.5" height="1" fill="#5a5a5a"/><rect x="9.5" y="143.25" width="1.5" height="1" fill="#5a5a5a"/><rect x="9.5" y="145.52" width="1.5" height="1" fill="#5a5a5a"/><rect x="1" y="147.80" width="10" height="1" fill="#646464"/><rect x="9.5" y="150.07" width="1.5" height="1" fill="#5a5a5a"/><rect x="9.5" y="152.35" width="1.5" height="1" fill="#5a5a5a"/><rect x="9.5" y="154.62" width="1.5" height="1" fill="#5a5a5a"/><rect x="8" y="156.90" width="3" height="1" fill="#5a5a5a"/><rect x="9.5" y="159.18" width="1.5" height="1" fill="#5a5a5a"/><rect x="9.5" y="161.45" width="1.5" height="1" fill="#5a5a5a"/><rect x="9.5" y="163.72" width="1.5" height="1" fill="#5a5a5a"/><rect x="6" y="166.00" width="5" height="1" fill="#5a5a5a"/><rect x="9.5" y="168.27" width="1.5" height="1" fill="#5a5a5a"/><rect x="9.5" y="170.55" width="1.5" height="1" fill="#5a5a5a"/><rect x="9.5" y="172.82" width="1.5" height="1" fill="#5a5a5a"/><rect x="8" y="175.10" width="3" height="1" fill="#5a5a5a"/><rect x="9.5" y="177.38" width="1.5" height="1" fill="#5a5a5a"/><rect x="9.5" y="179.65" width="1.5" height="1" fill="#5a5a5a"/><rect x="9.5" y="181.93" width="1.5" height="1" fill="#5a5a5a"/><rect x="1" y="184.20" width="10" height="1" fill="#646464"/><rect x="9.5" y="186.47" width="1.5" height="1" fill="#5a5a5a"/><rect x="9.5" y="188.75" width="1.5" height="1" fill="#5a5a5a"/><rect x="9.5" y="191.02" width="1.5" height="1" fill="#5a5a5a"/><rect x="8" y="193.30" width="3" height="1" fill="#5a5a5a"/><rect x="9.5" y="195.57" width="1.5" height="1" fill="#5a5a5a"/><rect x="9.5" y="197.85" width="1.5" height="1" fill="#5a5a5a"/><rect x="9.5" y="200.12" width="1.5" height="1" fill="#5a5a5a"/><rect x="6" y="202.40" width="5" height="1" fill="#5a5a5a"/><rect x="9.5" y="204.67" width="1.5" height="1" fill="#5a5a5a"/><rect x="9.5" y="206.95" width="1.5" height="1" fill="#5a5a5a"/><rect x="9.5" y="209.22" width="1.5" height="1" fill="#5a5a5a"/><rect x="8" y="211.50" width="3" height="1" fill="#5a5a5a"/><rect x="9.5" y="213.78" width="1.5" height="1" fill="#5a5a5a"/><rect x="9.5" y="216.05" width="1.5" height="1" fill="#5a5a5a"/><rect x="9.5" y="218.32" width="1.5" height="1" fill="#5a5a5a"/><rect x="1" y="220.60" width="10" height="1" fill="#646464"/><rect x="9.5" y="222.88" width="1.5" height="1" fill="#5a5a5a"/><rect x="9.5" y="225.15" width="1.5" height="1" fill="#5a5a5a"/><rect x="9.5" y="227.42" width="1.5" height="1" fill="#5a5a5a"/><rect x="8" y="229.70" width="3" height="1" fill="#5a5a5a"/><rect x="9.5" y="231.97" width="1.5" height="1" fill="#5a5a5a"/><rect x="9.5" y="234.25" width="1.5" height="1" fill="#5a5a5a"/><rect x="9.5" y="236.53" width="1.5" height="1" fill="#5a5a5a"/><rect x="6" y="238.80" width="5" height="1" fill="#5a5a5a"/><rect x="9.5" y="241.07" width="1.5" height="1" fill="#5a5a5a"/><rect x="9.5" y="243.35" width="1.5" height="1" fill="#5a5a5a"/><rect x="9.5" y="245.62" width="1.5" height="1" fill="#5a5a5a"/><rect x="8" y="247.90" width="3" height="1" fill="#5a5a5a"/><rect x="9.5" y="250.17" width="1.5" height="1" fill="#5a5a5a"/><rect x="9.5" y="252.45" width="1.5" height="1" fill="#5a5a5a"/><rect x="9.5" y="254.72" width="1.5" height="1" fill="#5a5a5a"/><rect x="1" y="257.00" width="10" height="1" fill="#646464"/><rect x="9.5" y="259.27" width="1.5" height="1" fill="#5a5a5a"/><rect x="9.5" y="261.55" width="1.5" height="1" fill="#5a5a5a"/><rect x="9.5" y="263.82" width="1.5" height="1" fill="#5a5a5a"/><rect x="8" y="266.10" width="3" height="1" fill="#5a5a5a"/><rect x="9.5" y="268.38" width="1.5" height="1" fill="#5a5a5a"/><rect x="9.5" y="270.65" width="1.5" height="1" fill="#5a5a5a"/><rect x="9.5" y="272.92" width="1.5" height="1" fill="#5a5a5a"/><rect x="6" y="275.20" width="5" height="1" fill="#5a5a5a"/><rect x="9.5" y="277.48" width="1.5" height="1" fill="#5a5a5a"/><rect x="9.5" y="279.75" width="1.5" height="1" fill="#5a5a5a"/><rect x="9.5" y="282.02" width="1.5" height="1" fill="#5a5a5a"/><rect x="8" y="284.30" width="3" height="1" fill="#5a5a5a"/><rect x="9.5" y="286.57" width="1.5" height="1" fill="#5a5a5a"/><rect x="9.5" y="288.85" width="1.5" height="1" fill="#5a5a5a"/><rect x="9.5" y="291.12" width="1.5" height="1" fill="#5a5a5a"/><rect x="1" y="293.40" width="10" height="1" fill="#646464"/><rect x="9.5" y="295.67" width="1.5" height="1" fill="#5a5a5a"/><rect x="9.5" y="297.95" width="1.5" height="1" fill="#5a5a5a"/><rect x="9.5" y="300.23" width="1.5" height="1" fill="#5a5a5a"/><rect x="8" y="302.50" width="3" height="1" fill="#5a5a5a"/><rect x="9.5" y="304.77" width="1.5" height="1" fill="#5a5a5a"/><rect x="9.5" y="307.05" width="1.5" height="1" fill="#5a5a5a"/><rect x="9.5" y="309.32" width="1.5" height="1" fill="#5a5a5a"/><rect x="6" y="311.60" width="5" height="1" fill="#5a5a5a"/><rect x="9.5" y="313.88" width="1.5" height="1" fill="#5a5a5a"/><rect x="9.5" y="316.15" width="1.5" height="1" fill="#5a5a5a"/><rect x="9.5" y="318.42" width="1.5" height="1" fill="#5a5a5a"/><rect x="8" y="320.70" width="3" height="1" fill="#5a5a5a"/><rect x="9.5" y="322.98" width="1.5" height="1" fill="#5a5a5a"/><rect x="9.5" y="325.25" width="1.5" height="1" fill="#5a5a5a"/><rect x="9.5" y="327.52" width="1.5" height="1" fill="#5a5a5a"/><rect x="1" y="329.80" width="10" height="1" fill="#646464"/><rect x="9.5" y="332.07" width="1.5" height="1" fill="#5a5a5a"/><rect x="9.5" y="334.35" width="1.5" height="1" fill="#5a5a5a"/><rect x="9.5" y="336.62" width="1.5" height="1" fill="#5a5a5a"/><rect x="8" y="338.90" width="3" height="1" fill="#5a5a5a"/><rect x="9.5" y="341.18" width="1.5" height="1" fill="#5a5a5a"/><rect x="9.5" y="343.45" width="1.5" height="1" fill="#5a5a5a"/><rect x="9.5" y="345.72" width="1.5" height="1" fill="#5a5a5a"/><rect x="6" y="348.00" width="5" height="1" fill="#5a5a5a"/><rect x="9.5" y="350.27" width="1.5" height="1" fill="#5a5a5a"/><rect x="9.5" y="352.55" width="1.5" height="1" fill="#5a5a5a"/><rect x="9.5" y="354.82" width="1.5" height="1" fill="#5a5a5a"/><rect x="8" y="357.10" width="3" height="1" fill="#5a5a5a"/><rect x="9.5" y="359.38" width="1.5" height="1" fill="#5a5a5a"/><rect x="9.5" y="361.65" width="1.5" height="1" fill="#5a5a5a"/><rect x="9.5" y="363.93" width="1.5" height="1" fill="#5a5a5a"/><rect x="1" y="366.20" width="10" height="1" fill="#646464"/><rect x="9.5" y="368.47" width="1.5" height="1" fill="#5a5a5a"/><rect x="9.5" y="370.75" width="1.5" height="1" fill="#5a5a5a"/><rect x="9.5" y="373.02" width="1.5" height="1" fill="#5a5a5a"/><rect x="8" y="375.30" width="3" height="1" fill="#5a5a5a"/><rect x="9.5" y="377.57" width="1.5" height="1" fill="#5a5a5a"/><rect x="9.5" y="379.85" width="1.5" height="1" fill="#5a5a5a"/><rect x="9.5" y="382.12" width="1.5" height="1" fill="#5a5a5a"/><rect x="6" y="384.40" width="5" height="1" fill="#5a5a5a"/><rect x="9.5" y="386.68" width="1.5" height="1" fill="#5a5a5a"/><rect x="9.5" y="388.95" width="1.5" height="1" fill="#5a5a5a"/><rect x="9.5" y="391.22" width="1.5" height="1" fill="#5a5a5a"/><rect x="8" y="393.50" width="3" height="1" fill="#5a5a5a"/><rect x="9.5" y="395.77" width="1.5" height="1" fill="#5a5a5a"/><rect x="9.5" y="398.05" width="1.5" height="1" fill="#5a5a5a"/><rect x="9.5" y="400.32" width="1.5" height="1" fill="#5a5a5a"/><rect x="1" y="402.60" width="10" height="1" fill="#646464"/><rect x="9.5" y="404.88" width="1.5" height="1" fill="#5a5a5a"/><rect x="9.5" y="407.15" width="1.5" height="1" fill="#5a5a5a"/><rect x="9.5" y="409.43" width="1.5" height="1" fill="#5a5a5a"/><rect x="8" y="411.70" width="3" height="1" fill="#5a5a5a"/><rect x="9.5" y="413.97" width="1.5" height="1" fill="#5a5a5a"/><rect x="9.5" y="416.25" width="1.5" height="1" fill="#5a5a5a"/><rect x="9.5" y="418.52" width="1.5" height="1" fill="#5a5a5a"/><rect x="6" y="420.80" width="5" height="1" fill="#5a5a5a"/><rect x="9.5" y="423.07" width="1.5" height="1" fill="#5a5a5a"/><rect x="9.5" y="425.35" width="1.5" height="1" fill="#5a5a5a"/><rect x="9.5" y="427.62" width="1.5" height="1" fill="#5a5a5a"/><rect x="8" y="429.90" width="3" height="1" fill="#5a5a5a"/><rect x="9.5" y="432.18" width="1.5" height="1" fill="#5a5a5a"/><rect x="9.5" y="434.45" width="1.5" height="1" fill="#5a5a5a"/><rect x="9.5" y="436.72" width="1.5" height="1" fill="#5a5a5a"/><rect x="1" y="439.00" width="10" height="1" fill="#646464"/><rect x="9.5" y="441.27" width="1.5" height="1" fill="#5a5a5a"/><rect x="9.5" y="443.55" width="1.5" height="1" fill="#5a5a5a"/><rect x="9.5" y="445.82" width="1.5" height="1" fill="#5a5a5a"/><rect x="8" y="448.10" width="3" height="1" fill="#5a5a5a"/><rect x="9.5" y="450.38" width="1.5" height="1" fill="#5a5a5a"/><rect x="9.5" y="452.65" width="1.5" height="1" fill="#5a5a5a"/><rect x="9.5" y="454.93" width="1.5" height="1" fill="#5a5a5a"/><rect x="6" y="457.20" width="5" height="1" fill="#5a5a5a"/><rect x="9.5" y="459.47" width="1.5" height="1" fill="#5a5a5a"/><rect x="9.5" y="461.75" width="1.5" height="1" fill="#5a5a5a"/><rect x="9.5" y="464.02" width="1.5" height="1" fill="#5a5a5a"/><rect x="8" y="466.30" width="3" height="1" fill="#5a5a5a"/><rect x="9.5" y="468.57" width="1.5" height="1" fill="#5a5a5a"/><rect x="9.5" y="470.85" width="1.5" height="1" fill="#5a5a5a"/><rect x="9.5" y="473.12" width="1.5" height="1" fill="#5a5a5a"/><rect x="1" y="475.40" width="10" height="1" fill="#646464"/><rect x="9.5" y="477.68" width="1.5" height="1" fill="#5a5a5a"/><rect x="9.5" y="479.95" width="1.5" height="1" fill="#5a5a5a"/><rect x="9.5" y="482.22" width="1.5" height="1" fill="#5a5a5a"/><rect x="8" y="484.50" width="3" height="1" fill="#5a5a5a"/><rect x="9.5" y="486.77" width="1.5" height="1" fill="#5a5a5a"/></svg>
<div class="a t" style="left:24px;top:45.2px;font-size:6px;color:#d4d4d4;transform:rotate(-90deg);transform-origin:0 0">2</div>
<div class="a t" style="left:24px;top:81.6px;font-size:6px;color:#d4d4d4;transform:rotate(-90deg);transform-origin:0 0">0</div>
<div class="a t" style="left:24px;top:118.0px;font-size:6px;color:#d4d4d4;transform:rotate(-90deg);transform-origin:0 0">2</div>
<div class="a t" style="left:24px;top:154.4px;font-size:6px;color:#d4d4d4;transform:rotate(-90deg);transform-origin:0 0">4</div>
<div class="a t" style="left:24px;top:190.8px;font-size:6px;color:#d4d4d4;transform:rotate(-90deg);transform-origin:0 0">6</div>
<div class="a t" style="left:24px;top:227.2px;font-size:6px;color:#d4d4d4;transform:rotate(-90deg);transform-origin:0 0">8</div>
<div class="a t" style="left:24px;top:267.2px;font-size:6px;color:#d4d4d4;transform:rotate(-90deg);transform-origin:0 0">10</div>
<div class="a t" style="left:24px;top:303.6px;font-size:6px;color:#d4d4d4;transform:rotate(-90deg);transform-origin:0 0">12</div>
<div class="a t" style="left:24px;top:340.0px;font-size:6px;color:#d4d4d4;transform:rotate(-90deg);transform-origin:0 0">14</div>
<div class="a t" style="left:24px;top:376.4px;font-size:6px;color:#d4d4d4;transform:rotate(-90deg);transform-origin:0 0">16</div>
<div class="a t" style="left:24px;top:412.8px;font-size:6px;color:#d4d4d4;transform:rotate(-90deg);transform-origin:0 0">18</div>
<div class="a t" style="left:24px;top:449.2px;font-size:6px;color:#d4d4d4;transform:rotate(-90deg);transform-origin:0 0">20</div>
<div class="a t" style="left:24px;top:485.6px;font-size:6px;color:#d4d4d4;transform:rotate(-90deg);transform-origin:0 0">22</div>
<div class="a" style="left:23px;top:489px;width:717px;height:11px;background:#3d3d3d;"></div>
<div class="a" style="left:23px;top:489px;width:717px;height:1px;background:#2e2e2e;"></div>
<div class="a" style="left:64px;top:490px;width:112px;height:10px;background:#494949;"></div>
<div class="a t" style="left:25px;top:491px;font-size:7px;color:#f0f0f0;">107.37%</div>
<svg class="a" style="left:56px;top:491px" width="8" height="8"><rect x="0.5" y="0.5" width="7" height="7" rx="2" fill="#8a8a8a"/><circle cx="4" cy="4" r="2" fill="#d0d0d0"/></svg>
<div class="a t" style="left:88px;top:491px;font-size:7px;color:#f0f0f0;">文档:1.43M/0 字节</div>
<div class="a t" style="left:170px;top:491px;font-size:7px;color:#f0f0f0;">&#x25B6;</div>
<div class="a" style="left:116px;top:75px;width:541px;height:382px;background:#ffffff;box-shadow:1px 1px 0 1px #1e1e1e"></div>
<svg class="a" style="left:0;top:0" width="919" height="500">
  <ellipse cx="205.8" cy="160.7" rx="33" ry="32.7" fill="none" stroke="#000" stroke-width="7.8"/>
  <ellipse cx="310.9" cy="268.9" rx="118.1" ry="115.9" fill="none" stroke="#000" stroke-width="2"/>
  <ellipse cx="310.8" cy="274.6" rx="55.8" ry="56.1" fill="none" stroke="#000" stroke-width="8.2"/>
  <ellipse cx="488.6" cy="209" rx="55.6" ry="55.4" fill="none" stroke="#000" stroke-width="2.2"/>
  <ellipse cx="522.3" cy="367.9" rx="63.9" ry="63.9" fill="none" stroke="#000" stroke-width="2.2"/>
</svg>
<div class="a" style="left:740px;top:19px;width:179px;height:481px;background:#494949;"></div>
<div class="a" style="left:740px;top:19px;width:12px;height:481px;background:#393939;"></div>
<div class="a" style="left:746px;top:19px;width:1px;height:481px;background:#404040;"></div>
<div class="a" style="left:750px;top:19px;width:2px;height:481px;background:#2e2e2e;"></div>
<div class="a" style="left:752px;top:19px;width:167px;height:8px;background:#383838;"></div>
<div class="a t" style="left:765px;top:20px;font-size:7px;color:#e4e4e4;">&#x00AB;</div>
<div class="a t" style="left:910px;top:20px;font-size:7px;color:#e4e4e4;">&#x00BB;</div>
<div class="a" style="left:752px;top:27px;width:21px;height:473px;background:#4a4a4a;"></div>
<div class="a" style="left:773px;top:27px;width:2px;height:473px;background:#333333;"></div>
<div class="a" style="left:753px;top:27px;width:20px;height:208px;background:#4e4e4e;"></div>
<div class="a" style="left:753px;top:54px;width:20px;height:2px;background:#3e3e3e;"></div>
<div class="a" style="left:757px;top:57px;width:12px;height:1px;background:#6c6c6c;"></div>
<div class="a" style="left:753px;top:79px;width:20px;height:2px;background:#3e3e3e;"></div>
<div class="a" style="left:757px;top:82px;width:12px;height:1px;background:#6c6c6c;"></div>
<div class="a" style="left:753px;top:120px;width:20px;height:2px;background:#3e3e3e;"></div>
<div class="a" style="left:757px;top:123px;width:12px;height:1px;background:#6c6c6c;"></div>
<div class="a" style="left:753px;top:143px;width:20px;height:2px;background:#3e3e3e;"></div>
<div class="a" style="left:757px;top:146px;width:12px;height:1px;background:#6c6c6c;"></div>
<div class="a" style="left:753px;top:185px;width:20px;height:2px;background:#3e3e3e;"></div>
<div class="a" style="left:757px;top:188px;width:12px;height:1px;background:#6c6c6c;"></div>
<div class="a" style="left:753px;top:209px;width:20px;height:2px;background:#3e3e3e;"></div>
<div class="a" style="left:757px;top:212px;width:12px;height:1px;background:#6c6c6c;"></div>
<div class="a" style="left:753px;top:234px;width:20px;height:2px;background:#3e3e3e;"></div>
<div class="a" style="left:757px;top:237px;width:12px;height:1px;background:#6c6c6c;"></div>
<div class="a" style="left:757px;top:30px;width:12px;height:1px;background:#6c6c6c;"></div>
<svg class="a" style="left:752px;top:0" width="22" height="240">
<text x="6" y="44" style="font-family:'Liberation Serif';font-size:9px;font-weight:bold" fill="#c0c0c0">A</text><rect x="13.5" y="36" width="1.2" height="8" fill="#c0c0c0"/><path d="M14 37 q3 1 1 4" stroke="#c0c0c0" fill="none"/>
<rect x="6" y="64" width="4" height="4" fill="#bcbcbc"/><rect x="12" y="64" width="4" height="1.2" fill="#bcbcbc"/><rect x="12" y="67" width="4" height="1.2" fill="#bcbcbc"/><rect x="6" y="70" width="10" height="1.2" fill="#bcbcbc"/>
<path d="M7 81 l3 3 l3 -3 M10 84 v5 M7 89 h6" stroke="#bcbcbc" fill="none" stroke-width="1.2"/>
<path d="M5 104 h8 M9 101 l4 3 l-4 3 M6 110 h6" stroke="#bcbcbc" fill="none" stroke-width="1.2"/><circle cx="14" cy="110" r="2" fill="#bcbcbc"/>
<text x="7" y="135" style="font-family:'Liberation Sans';font-size:10px;font-weight:bold" fill="#bcbcbc">&#xB6;</text>
<circle cx="8" cy="158" r="2" fill="none" stroke="#bcbcbc"/><circle cx="10" cy="161" r="2" fill="none" stroke="#bcbcbc"/><text x="11" y="159" style="font-family:'Liberation Sans';font-size:9px;font-weight:bold" fill="#bcbcbc">&#xB6;</text>
<circle cx="8" cy="175" r="2" fill="none" stroke="#bcbcbc"/><circle cx="10" cy="178" r="2" fill="none" stroke="#bcbcbc"/><text x="10" y="175" style="font-family:'Liberation Sans';font-size:9px" fill="#bcbcbc">A</text>
<path d="M6 192 L16 197 L6 202z" fill="#bcbcbc"/>
<ellipse cx="11" cy="223" rx="6" ry="4" fill="#bcbcbc"/><circle cx="8" cy="222" r="1" fill="#505050"/><circle cx="11" cy="221" r="1" fill="#505050"/><circle cx="14" cy="222" r="1" fill="#505050"/><circle cx="11" cy="225" r="1" fill="#505050"/>
</svg>
<div class="a" style="left:775px;top:27px;width:144px;height:11px;background:#353535;"></div>
<div class="a" style="left:775px;top:27px;width:24px;height:11px;background:#494949;"></div>
<div class="a t" style="left:779px;top:29px;font-size:8px;color:#f0f0f0;">字符</div>
<div class="a t" style="left:907px;top:28px;font-size:7px;color:#cfcfcf;">&#x25BE;&#x2261;</div>
<div class="a" style="left:775px;top:38px;width:144px;height:158px;background:#494949;"></div>
<div class="a" style="left:781px;top:41px;width:52px;height:11px;background:#3a3a3a;"></div>
<div class="a t" style="left:784px;top:43px;font-size:8px;color:#f4f4f4;">黑体</div>
<div class="a" style="left:833px;top:41px;width:12px;height:11px;background:#6c6c6c;"></div>
<div class="a" style="left:837px;top:46px;width:4px;height:1px;background:#eee;"></div>
<div class="a" style="left:853px;top:41px;width:30px;height:11px;background:#4c4c4c;"></div>
<div class="a t" style="left:864px;top:43px;font-size:7px;color:#999;">-</div>
<div class="a" style="left:884px;top:41px;width:12px;height:11px;background:#5a5a5a;"></div>
<div class="a" style="left:888px;top:46px;width:4px;height:1px;background:#bbb;"></div>
<div class="a" style="left:777px;top:56px;width:134px;height:1px;background:#474747;"></div>
<div class="a t" style="left:776px;top:59px;font-size:8px;color:#cfcfcf;"><span style="font-family:Liberation Serif;font-size:11px">T</span></div>
<div class="a" style="left:789px;top:60px;width:43px;height:11px;background:#3a3a3a;"></div>
<div class="a t" style="left:792px;top:62px;font-size:8px;color:#f4f4f4;">24 点</div>
<div class="a" style="left:832px;top:60px;width:11px;height:11px;background:#6a6a6a;"></div>
<div class="a" style="left:835px;top:65px;width:5px;height:1px;background:#eee;"></div>
<div class="a t" style="left:849px;top:60px;font-size:8px;color:#cfcfcf;"><span style="font-size:9px">&#x21C5;</span></div>
<div class="a" style="left:860px;top:60px;width:36px;height:11px;background:#3a3a3a;"></div>
<div class="a t" style="left:863px;top:62px;font-size:8px;color:#f4f4f4;">(自动)</div>
<div class="a" style="left:896px;top:60px;width:11px;height:11px;background:#6a6a6a;"></div>
<div class="a" style="left:899px;top:65px;width:5px;height:1px;background:#eee;"></div>
<div class="a t" style="left:776px;top:76px;font-size:8px;color:#cfcfcf;font-weight:bold">VA</div>
<div class="a" style="left:789px;top:75px;width:43px;height:11px;background:#3a3a3a;"></div>
<div class="a" style="left:832px;top:75px;width:11px;height:11px;background:#6a6a6a;"></div>
<div class="a" style="left:835px;top:80px;width:5px;height:1px;background:#eee;"></div>
<div class="a t" style="left:849px;top:75px;font-size:7px;color:#cfcfcf;font-weight:bold;border-bottom:1px solid #ccc">VA</div>
<div class="a" style="left:860px;top:75px;width:36px;height:11px;background:#3a3a3a;"></div>
<div class="a t" style="left:863px;top:77px;font-size:8px;color:#f4f4f4;">0</div>
<div class="a" style="left:896px;top:75px;width:11px;height:11px;background:#6a6a6a;"></div>
<div class="a" style="left:899px;top:80px;width:5px;height:1px;background:#eee;"></div>
<div class="a" style="left:777px;top:90px;width:134px;height:1px;background:#474747;"></div>
<div class="a t" style="left:777px;top:94px;font-size:8px;color:#cfcfcf;">&#x2234;</div>
<div class="a" style="left:789px;top:93px;width:37px;height:11px;background:#3a3a3a;"></div>
<div class="a t" style="left:792px;top:95px;font-size:8px;color:#f4f4f4;">0%</div>
<div class="a" style="left:826px;top:93px;width:11px;height:11px;background:#6a6a6a;"></div>
<div class="a" style="left:829px;top:98px;width:5px;height:1px;background:#eee;"></div>
<div class="a" style="left:777px;top:107px;width:134px;height:1px;background:#474747;"></div>
<div class="a t" style="left:776px;top:110px;font-size:8px;color:#cfcfcf;"><span style="font-family:Liberation Serif;font-size:11px">IT</span></div>
<div class="a" style="left:789px;top:110px;width:33px;height:10px;background:#3a3a3a;"></div>
<div class="a t" style="left:792px;top:112px;font-size:8px;color:#f4f4f4;">100%</div>
<div class="a t" style="left:862px;top:109px;font-size:8px;color:#cfcfcf;"><span style="font-family:Liberation Serif;font-size:11px;text-decoration:underline">T</span></div>
<div class="a" style="left:874px;top:110px;width:33px;height:10px;background:#3a3a3a;"></div>
<div class="a t" style="left:877px;top:112px;font-size:8px;color:#f4f4f4;">100%</div>
<div class="a t" style="left:777px;top:124px;font-size:8px;color:#cfcfcf;">A&#x2195;</div>
<div class="a" style="left:789px;top:123px;width:33px;height:11px;background:#3a3a3a;"></div>
<div class="a t" style="left:792px;top:125px;font-size:8px;color:#f4f4f4;">0 点</div>
<div class="a t" style="left:853px;top:125px;font-size:8px;color:#f0f0f0;">颜色:</div>
<div class="a" style="left:875px;top:124px;width:32px;height:10px;background:#dbb47c;border:1px solid #3a3a3a"></div>
<div class="a" style="left:777px;top:139px;width:134px;height:1px;background:#474747;"></div>
<div class="a t" style="left:789px;top:143px;font-size:9px;color:#d8d8d8;font-family:Liberation Serif;font-weight:bold;letter-spacing:-1px">T</div>
<div class="a t" style="left:803px;top:143px;font-size:9px;color:#d8d8d8;font-family:Liberation Serif;font-weight:bold;letter-spacing:-1px"><i>T</i></div>
<div class="a t" style="left:817px;top:143px;font-size:9px;color:#d8d8d8;font-family:Liberation Serif;font-weight:bold;letter-spacing:-1px">TT</div>
<div class="a t" style="left:832px;top:143px;font-size:9px;color:#d8d8d8;font-family:Liberation Serif;font-weight:bold;letter-spacing:-1px">T<small>T</small></div>
<div class="a t" style="left:846px;top:143px;font-size:9px;color:#d8d8d8;font-family:Liberation Serif;font-weight:bold;letter-spacing:-1px">T<sup>T</sup></div>
<div class="a t" style="left:861px;top:143px;font-size:9px;color:#d8d8d8;font-family:Liberation Serif;font-weight:bold;letter-spacing:-1px">T<sub>T</sub></div>
<div class="a" style="left:873px;top:141px;width:14px;height:14px;background:#3a3a3a;"></div>
<div class="a t" style="left:875px;top:143px;font-size:9px;color:#d8d8d8;font-family:Liberation Serif;font-weight:bold;letter-spacing:-1px"><u>T</u></div>
<div class="a t" style="left:889px;top:143px;font-size:9px;color:#d8d8d8;font-family:Liberation Serif;font-weight:bold;letter-spacing:-1px"><s>T</s></div>
<div class="a" style="left:777px;top:157px;width:134px;height:1px;background:#474747;"></div>
<div class="a t" style="left:790px;top:162px;font-size:9px;color:#7a7a7a;font-family:Liberation Serif;font-style:italic">fi</div>
<div class="a t" style="left:804px;top:162px;font-size:9px;color:#7a7a7a;font-family:Liberation Serif;font-style:italic">&#x03C3;</div>
<div class="a t" style="left:818px;top:162px;font-size:9px;color:#7a7a7a;font-family:Liberation Serif;font-style:italic">st</div>
<div class="a t" style="left:833px;top:162px;font-size:9px;color:#7a7a7a;font-family:Liberation Serif;font-style:italic"><i>A</i></div>
<div class="a t" style="left:847px;top:162px;font-size:9px;color:#7a7a7a;font-family:Liberation Serif;font-style:italic">aa</div>
<div class="a t" style="left:862px;top:162px;font-size:9px;color:#7a7a7a;font-family:Liberation Serif;font-style:italic">T</div>
<div class="a t" style="left:876px;top:162px;font-size:9px;color:#7a7a7a;font-family:Liberation Serif;font-style:italic">1<sup>st</sup></div>
<div class="a t" style="left:890px;top:162px;font-size:9px;color:#7a7a7a;font-family:Liberation Serif;font-style:italic">&#xBD;</div>
<div class="a" style="left:777px;top:176px;width:134px;height:1px;background:#474747;"></div>
<div class="a" style="left:781px;top:180px;width:78px;height:11px;background:#5c5c5c;border:1px solid #474747"></div>
<div class="a t" style="left:785px;top:182px;font-size:8px;color:#f0f0f0;">美国英语</div>
<div class="a t" style="left:852px;top:181px;font-size:7px;color:#cfcfcf;">&#x2B0D;</div>
<div class="a t" style="left:864px;top:182px;font-size:7px;color:#cfcfcf;"><sup>a</sup>a</div>
<div class="a" style="left:877px;top:180px;width:32px;height:11px;background:#5c5c5c;border:1px solid #474747"></div>
<div class="a t" style="left:881px;top:182px;font-size:8px;color:#f0f0f0;">锐利</div>
<div class="a t" style="left:902px;top:181px;font-size:7px;color:#cfcfcf;">&#x2B0D;</div>
<div class="a" style="left:775px;top:196px;width:144px;height:2px;background:#353535;"></div>
<div class="a" style="left:775px;top:198px;width:144px;height:9px;background:#353535;"></div>
<div class="a" style="left:775px;top:198px;width:24px;height:10px;background:#494949;"></div>
<div class="a t" style="left:779px;top:199px;font-size:8px;color:#f0f0f0;">色板</div>
<div class="a t" style="left:907px;top:199px;font-size:7px;color:#cfcfcf;">&#x25BE;&#x2261;</div>
<div class="a" style="left:775px;top:207px;width:144px;height:129px;background:#494949;"></div>
<svg class="a" style="left:775px;top:208px" width="130" height="52"><rect x="0.00" y="0.00" width="6.6" height="6.5" fill="#ff0000"/><rect x="7.17" y="0.00" width="6.6" height="6.5" fill="#ffff00"/><rect x="14.34" y="0.00" width="6.6" height="6.5" fill="#00ff00"/><rect x="21.51" y="0.00" width="6.6" height="6.5" fill="#00ffff"/><rect x="28.68" y="0.00" width="6.6" height="6.5" fill="#0000ff"/><rect x="35.85" y="0.00" width="6.6" height="6.5" fill="#ff00ff"/><rect x="43.02" y="0.00" width="6.6" height="6.5" fill="#ffffff"/><rect x="50.19" y="0.00" width="6.6" height="6.5" fill="#ebebeb"/><rect x="57.36" y="0.00" width="6.6" height="6.5" fill="#f0f0f0"/><rect x="64.53" y="0.00" width="6.6" height="6.5" fill="#d6d6d6"/><rect x="71.70" y="0.00" width="6.6" height="6.5" fill="#cccccc"/><rect x="78.87" y="0.00" width="6.6" height="6.5" fill="#c2c2c2"/><rect x="86.04" y="0.00" width="6.6" height="6.5" fill="#b8b8b8"/><rect x="93.21" y="0.00" width="6.6" height="6.5" fill="#afafaf"/><rect x="100.38" y="0.00" width="6.6" height="6.5" fill="#a6a6a6"/><rect x="107.55" y="0.00" width="6.6" height="6.5" fill="#9d9d9d"/><rect x="114.72" y="0.00" width="6.6" height="6.5" fill="#ed1c24"/><rect x="121.89" y="0.00" width="6.6" height="6.5" fill="#fff200"/><rect x="0.00" y="7.08" width="6.6" height="6.5" fill="#00a651"/><rect x="7.17" y="7.08" width="6.6" height="6.5" fill="#00aeef"/><rect x="14.34" y="7.08" width="6.6" height="6.5" fill="#2e3192"/><rect x="21.51" y="7.08" width="6.6" height="6.5" fill="#ec008c"/><rect x="28.68" y="7.08" width="6.6" height="6.5" fill="#949494"/><rect x="35.85" y="7.08" width="6.6" height="6.5" fill="#8a8a8a"/><rect x="43.02" y="7.08" width="6.6" height="6.5" fill="#808080"/><rect x="50.19" y="7.08" width="6.6" height="6.5" fill="#727272"/><rect x="57.36" y="7.08" width="6.6" height="6.5" fill="#636363"/><rect x="64.53" y="7.08" width="6.6" height="6.5" fill="#545454"/><rect x="71.70" y="7.08" width="6.6" height="6.5" fill="#444444"/><rect x="78.87" y="7.08" width="6.6" height="6.5" fill="#333333"/><rect x="86.04" y="7.08" width="6.6" height="6.5" fill="#1f1f1f"/><rect x="93.21" y="7.08" width="6.6" height="6.5" fill="#000000"/><rect x="100.38" y="7.08" width="6.6" height="6.5" fill="#f7977a"/><rect x="107.55" y="7.08" width="6.6" height="6.5" fill="#f9ad81"/><rect x="114.72" y="7.08" width="6.6" height="6.5" fill="#fdc68a"/><rect x="121.89" y="7.08" width="6.6" height="6.5" fill="#fff79a"/><rect x="0.00" y="14.16" width="6.6" height="6.5" fill="#c4df9b"/><rect x="7.17" y="14.16" width="6.6" height="6.5" fill="#a2d39c"/><rect x="14.34" y="14.16" width="6.6" height="6.5" fill="#82ca9d"/><rect x="21.51" y="14.16" width="6.6" height="6.5" fill="#7bcdc8"/><rect x="28.68" y="14.16" width="6.6" height="6.5" fill="#6ecff6"/><rect x="35.85" y="14.16" width="6.6" height="6.5" fill="#7ea7d8"/><rect x="43.02" y="14.16" width="6.6" height="6.5" fill="#8493ca"/><rect x="50.19" y="14.16" width="6.6" height="6.5" fill="#8882be"/><rect x="57.36" y="14.16" width="6.6" height="6.5" fill="#a187be"/><rect x="64.53" y="14.16" width="6.6" height="6.5" fill="#bc8dbf"/><rect x="71.70" y="14.16" width="6.6" height="6.5" fill="#f49ac2"/><rect x="78.87" y="14.16" width="6.6" height="6.5" fill="#f6989d"/><rect x="86.04" y="14.16" width="6.6" height="6.5" fill="#f26c4f"/><rect x="93.21" y="14.16" width="6.6" height="6.5" fill="#f68e55"/><rect x="100.38" y="14.16" width="6.6" height="6.5" fill="#fbaf5c"/><rect x="107.55" y="14.16" width="6.6" height="6.5" fill="#fff467"/><rect x="114.72" y="14.16" width="6.6" height="6.5" fill="#acd372"/><rect x="121.89" y="14.16" width="6.6" height="6.5" fill="#7cc576"/><rect x="0.00" y="21.24" width="6.6" height="6.5" fill="#3bb878"/><rect x="7.17" y="21.24" width="6.6" height="6.5" fill="#1abbb4"/><rect x="14.34" y="21.24" width="6.6" height="6.5" fill="#00bff3"/><rect x="21.51" y="21.24" width="6.6" height="6.5" fill="#438cca"/><rect x="28.68" y="21.24" width="6.6" height="6.5" fill="#5574b9"/><rect x="35.85" y="21.24" width="6.6" height="6.5" fill="#605ca8"/><rect x="43.02" y="21.24" width="6.6" height="6.5" fill="#855fa8"/><rect x="50.19" y="21.24" width="6.6" height="6.5" fill="#a763a8"/><rect x="57.36" y="21.24" width="6.6" height="6.5" fill="#f06ea9"/><rect x="64.53" y="21.24" width="6.6" height="6.5" fill="#f26d7d"/><rect x="71.70" y="21.24" width="6.6" height="6.5" fill="#ed1c24"/><rect x="78.87" y="21.24" width="6.6" height="6.5" fill="#f26522"/><rect x="86.04" y="21.24" width="6.6" height="6.5" fill="#f7941d"/><rect x="93.21" y="21.24" width="6.6" height="6.5" fill="#fff200"/><rect x="100.38" y="21.24" width="6.6" height="6.5" fill="#8dc73f"/><rect x="107.55" y="21.24" width="6.6" height="6.5" fill="#39b54a"/><rect x="114.72" y="21.24" width="6.6" height="6.5" fill="#00a651"/><rect x="121.89" y="21.24" width="6.6" height="6.5" fill="#00a99d"/><rect x="0.00" y="28.32" width="6.6" height="6.5" fill="#00aeef"/><rect x="7.17" y="28.32" width="6.6" height="6.5" fill="#0072bc"/><rect x="14.34" y="28.32" width="6.6" height="6.5" fill="#0054a6"/><rect x="21.51" y="28.32" width="6.6" height="6.5" fill="#2e3192"/><rect x="28.68" y="28.32" width="6.6" height="6.5" fill="#662d91"/><rect x="35.85" y="28.32" width="6.6" height="6.5" fill="#92278f"/><rect x="43.02" y="28.32" width="6.6" height="6.5" fill="#ec008c"/><rect x="50.19" y="28.32" width="6.6" height="6.5" fill="#ed145b"/><rect x="57.36" y="28.32" width="6.6" height="6.5" fill="#9e0b0f"/><rect x="64.53" y="28.32" width="6.6" height="6.5" fill="#a0410d"/><rect x="71.70" y="28.32" width="6.6" height="6.5" fill="#a36209"/><rect x="78.87" y="28.32" width="6.6" height="6.5" fill="#aba000"/><rect x="86.04" y="28.32" width="6.6" height="6.5" fill="#598527"/><rect x="93.21" y="28.32" width="6.6" height="6.5" fill="#1a7b30"/><rect x="100.38" y="28.32" width="6.6" height="6.5" fill="#007236"/><rect x="107.55" y="28.32" width="6.6" height="6.5" fill="#00746b"/><rect x="114.72" y="28.32" width="6.6" height="6.5" fill="#0076a3"/><rect x="121.89" y="28.32" width="6.6" height="6.5" fill="#004b80"/><rect x="0.00" y="35.40" width="6.6" height="6.5" fill="#003471"/><rect x="7.17" y="35.40" width="6.6" height="6.5" fill="#1b1464"/><rect x="14.34" y="35.40" width="6.6" height="6.5" fill="#440e62"/><rect x="21.51" y="35.40" width="6.6" height="6.5" fill="#630460"/><rect x="28.68" y="35.40" width="6.6" height="6.5" fill="#9e005d"/><rect x="35.85" y="35.40" width="6.6" height="6.5" fill="#9e0039"/><rect x="43.02" y="35.40" width="6.6" height="6.5" fill="#790000"/><rect x="50.19" y="35.40" width="6.6" height="6.5" fill="#7b2e00"/><rect x="57.36" y="35.40" width="6.6" height="6.5" fill="#7d4900"/><rect x="64.53" y="35.40" width="6.6" height="6.5" fill="#827b00"/><rect x="71.70" y="35.40" width="6.6" height="6.5" fill="#406618"/><rect x="78.87" y="35.40" width="6.6" height="6.5" fill="#005e20"/><rect x="86.04" y="35.40" width="6.6" height="6.5" fill="#005826"/><rect x="93.21" y="35.40" width="6.6" height="6.5" fill="#005952"/><rect x="100.38" y="35.40" width="6.6" height="6.5" fill="#005b7f"/><rect x="107.55" y="35.40" width="6.6" height="6.5" fill="#003663"/><rect x="114.72" y="35.40" width="6.6" height="6.5" fill="#002157"/><rect x="121.89" y="35.40" width="6.6" height="6.5" fill="#0d004c"/><rect x="0.00" y="42.48" width="6.6" height="6.5" fill="#32004b"/><rect x="7.17" y="42.48" width="6.6" height="6.5" fill="#4b0049"/><rect x="14.34" y="42.48" width="6.6" height="6.5" fill="#7b0046"/><rect x="21.51" y="42.48" width="6.6" height="6.5" fill="#7a0026"/><rect x="28.68" y="42.48" width="6.6" height="6.5" fill="#c7b299"/><rect x="35.85" y="42.48" width="6.6" height="6.5" fill="#998675"/><rect x="43.02" y="42.48" width="6.6" height="6.5" fill="#736357"/><rect x="50.19" y="42.48" width="6.6" height="6.5" fill="#534741"/><rect x="57.36" y="42.48" width="6.6" height="6.5" fill="#37302d"/><rect x="64.53" y="42.48" width="6.6" height="6.5" fill="#c69c6e"/><rect x="71.70" y="42.48" width="6.6" height="6.5" fill="#a67c52"/><rect x="78.87" y="42.48" width="6.6" height="6.5" fill="#8c6239"/><rect x="86.04" y="42.48" width="6.6" height="6.5" fill="#754c24"/><rect x="93.21" y="42.48" width="6.6" height="6.5" fill="#603913"/><rect x="100.38" y="42.48" width="6.6" height="6.5" fill="#a8a4a8"/></svg>
<div class="a" style="left:908px;top:207px;width:1px;height:129px;background:#3a3a3a;"></div>
<div class="a" style="left:909px;top:207px;width:10px;height:129px;background:#434343;"></div>
<div class="a" style="left:775px;top:336px;width:144px;height:11px;background:#494949;"></div>
<div class="a" style="left:775px;top:336px;width:144px;height:1px;background:#474747;"></div>
<div class="a t" style="left:878px;top:337px;font-size:8px;color:#bbb;">&#x25A3;</div>
<div class="a t" style="left:896px;top:337px;font-size:7px;color:#888;">&#x1F5D1;</div>
<div class="a" style="left:775px;top:347px;width:144px;height:2px;background:#353535;"></div>
<div class="a" style="left:775px;top:349px;width:144px;height:10px;background:#353535;"></div>
<div class="a" style="left:775px;top:349px;width:23px;height:10px;background:#494949;"></div>
<div class="a t" style="left:779px;top:350px;font-size:8px;color:#f0f0f0;">图层</div>
<div class="a t" style="left:802px;top:350px;font-size:8px;color:#c8c8c8;">通道</div>
<div class="a t" style="left:826px;top:350px;font-size:8px;color:#c8c8c8;">路径</div>
<div class="a" style="left:799px;top:349px;width:1px;height:10px;background:#3a3a3a;"></div>
<div class="a" style="left:823px;top:349px;width:1px;height:10px;background:#3a3a3a;"></div>
<div class="a t" style="left:907px;top:350px;font-size:7px;color:#cfcfcf;">&#x25BE;&#x2261;</div>
<div class="a" style="left:775px;top:359px;width:144px;height:141px;background:#494949;"></div>
<div class="a" style="left:778px;top:361px;width:43px;height:12px;background:#5c5c5c;border:1px solid #474747"></div>
<div class="a t" style="left:781px;top:363px;font-size:8px;color:#f0f0f0;">&#x2315; 类型</div>
<div class="a t" style="left:814px;top:362px;font-size:7px;color:#cfcfcf;">&#x2B0D;</div>
<svg class="a" style="left:826px;top:361px" width="75" height="13">
<rect x="1.5" y="2.5" width="9" height="8" fill="none" stroke="#d0d0d0"/><path d="M2 10 l3 -4 l2 2 l2 -3 l1.5 5z" fill="#d0d0d0"/>
<circle cx="24" cy="6.5" r="4" fill="#d0d0d0"/><path d="M21 9.5 L27 3.5" stroke="#494949" stroke-width="1.5"/>
<path d="M35 2 h8 v1.6 h-3.2 v7.4 h-1.6 v-7.4 h-3.2z" fill="#d0d0d0"/>
<path d="M50 3 h8 v8 h-8z" fill="none" stroke="#d0d0d0" stroke-dasharray="2 1"/><rect x="49" y="1" width="1" height="3" fill="#d0d0d0"/><rect x="58" y="10" width="1" height="3" fill="#d0d0d0"/>
<rect x="66" y="4" width="7" height="7" fill="#d0d0d0"/><rect x="64" y="7" width="4" height="5" fill="#494949" stroke="#d0d0d0" stroke-width="0.8"/>
</svg>
<div class="a" style="left:912px;top:361px;width:5px;height:12px;background:#2e2e2e;"></div>
<div class="a" style="left:912px;top:361px;width:5px;height:6px;background:#9a9a9a;"></div>
<div class="a" style="left:778px;top:377px;width:66px;height:12px;background:#5c5c5c;border:1px solid #474747"></div>
<div class="a t" style="left:783px;top:379px;font-size:8px;color:#f0f0f0;">正常</div>
<div class="a t" style="left:837px;top:378px;font-size:7px;color:#cfcfcf;">&#x2B0D;</div>
<div class="a t" style="left:848px;top:379px;font-size:8px;color:#f0f0f0;">不透明度:</div>
<div class="a" style="left:883px;top:377px;width:22px;height:12px;background:#333333;"></div>
<div class="a t" style="left:885px;top:379px;font-size:7px;color:#f4f4f4;">100%</div>
<div class="a" style="left:905px;top:377px;width:10px;height:12px;background:#6a6a6a;"></div>
<div class="a" style="left:908px;top:383px;width:4px;height:1px;background:#eee;"></div>
<div class="a" style="left:775px;top:391px;width:144px;height:1px;background:#474747;"></div>
<div class="a t" style="left:778px;top:395px;font-size:8px;color:#f0f0f0;">锁定:</div>
<svg class="a" style="left:800px;top:393px" width="50" height="12">
<rect x="1" y="2" width="8" height="8" fill="#6a6a6a"/><rect x="1" y="2" width="4" height="4" fill="#8a8a8a"/><rect x="5" y="6" width="4" height="4" fill="#8a8a8a"/>
<path d="M14 10 L21 2" stroke="#8a8a8a" stroke-width="1.6"/>
<path d="M31 1 v10 M26 6 h10" stroke="#d0d0d0" stroke-width="1.2"/><path d="M31 0.5 l-1.5 2 h3z M31 11.5 l-1.5 -2 h3z M25.5 6 l2 -1.5 v3z M36.5 6 l-2 -1.5 v3z" fill="#d0d0d0"/>
<path d="M43 6 V4 Q43 1.5 45.5 1.5 Q48 1.5 48 4 V6" fill="none" stroke="#e0e0e0" stroke-width="1.2"/><rect x="42" y="6" width="7" height="5" fill="#e0e0e0"/>
</svg>
<div class="a t" style="left:863px;top:395px;font-size:8px;color:#f0f0f0;">填充:</div>
<div class="a" style="left:883px;top:393px;width:22px;height:12px;background:#333333;"></div>
<div class="a t" style="left:885px;top:395px;font-size:7px;color:#f4f4f4;">100%</div>
<div class="a" style="left:905px;top:393px;width:10px;height:12px;background:#6a6a6a;"></div>
<div class="a" style="left:908px;top:399px;width:4px;height:1px;background:#eee;"></div>
<div class="a" style="left:775px;top:408px;width:135px;height:80px;background:#494949;"></div>
<div class="a" style="left:775px;top:408px;width:135px;height:1px;background:#3a3a3a;"></div>
<div class="a" style="left:868px;top:409px;width:42px;height:24px;background:#5f7591;"></div>
<div class="a" style="left:775px;top:433px;width:135px;height:1px;background:#3a3a3a;"></div>
<div class="a" style="left:775px;top:456px;width:135px;height:1px;background:#3a3a3a;"></div>
<div class="a" style="left:775px;top:479px;width:135px;height:1px;background:#3a3a3a;"></div>
<svg class="a" style="left:891px;top:461px" width="10" height="11"><path d="M2.5 5 V3.5 Q2.5 1 5 1 Q7.5 1 7.5 3.5 V5" fill="none" stroke="#e0e0e0" stroke-width="1.2"/><rect x="1.5" y="5" width="7" height="5" fill="#e0e0e0"/></svg>
<div class="a" style="left:910px;top:408px;width:1px;height:80px;background:#3a3a3a;"></div>
<div class="a" style="left:911px;top:408px;width:8px;height:80px;background:#414141;"></div>
<svg class="a" style="left:775px;top:400px" width="30" height="10"><circle cx="6" cy="10" r="5" fill="#e8e8e8"/><circle cx="20" cy="10" r="5" fill="#e8e8e8"/></svg>
<div class="a" style="left:775px;top:488px;width:144px;height:12px;background:#464646;"></div>
<div class="a" style="left:775px;top:488px;width:144px;height:1px;background:#3a3a3a;"></div>
<div class="a t" style="left:797px;top:489px;font-size:8px;color:#9a9a9a;">&#x221E;</div>
<div class="a t" style="left:814px;top:489px;font-size:9px;color:#dddddd;font-family:Liberation Serif"><i>fx</i></div>
<svg class="a" style="left:828px;top:489px" width="80" height="11">
<rect x="2" y="2" width="9" height="7" fill="#dcdcdc"/><circle cx="6.5" cy="5.5" r="2.2" fill="#4d4d4d"/>
<circle cx="22" cy="5.5" r="3.8" fill="#dcdcdc"/><path d="M22 1.7 A3.8 3.8 0 0 1 22 9.3z" fill="#4d4d4d" transform="rotate(45 22 5.5)"/>
<path d="M34 3 h3 l1 1 h5 v5 h-9z" fill="#dcdcdc"/>
<rect x="50" y="2" width="8" height="7" fill="#dcdcdc"/><rect x="50" y="2" width="3" height="3" fill="#4d4d4d"/>
<rect x="66" y="3" width="7" height="6" fill="#9a9a9a"/><rect x="65" y="2" width="9" height="1" fill="#9a9a9a"/>
</svg>
<div class="a" style="left:740px;top:489px;width:12px;height:11px;background:#505050;"></div>
<div class="a" style="left:752px;top:489px;width:21px;height:11px;background:#555555;"></div>
<svg class="a" style="left:0;top:0" width="919" height="500">
  <line x1="126.3" y1="339.2" x2="285" y2="272" stroke="#c8201e" stroke-width="2.2"/>
  <polygon points="296.8,267.2 286.15,276.6 282.6,268.3" fill="#d81818"/>
  <line x1="88" y1="127" x2="168" y2="24" stroke="#cc1e22" stroke-width="3.2"/>
  <polygon points="175.6,13.8 170.8,27.2 163.2,22.4" fill="#e81010"/>
</svg>
<div class="a" style="left:703px;top:409px;width:165px;height:79px;background:#23305a;"></div>
<svg class="a" style="left:703px;top:409px" width="165" height="79" viewBox="0 0 165 79">
  <path d="M16 28 V46 Q16 54 24 54 L42 42 Q46 38 42 35" fill="none" stroke="#d9deec" stroke-width="2.6" stroke-linecap="round" stroke-linejoin="round"/>
  <path d="M26 47 H24 Q22 47 22 45 V27 Q22 23 26 25 L42 35" fill="none" stroke="#d9deec" stroke-width="2.6" stroke-linecap="round" stroke-linejoin="round"/>
  <path d="M25.5 35 L30.5 39 L25.5 43z" fill="#d9deec"/><rect x="32.5" y="36.5" width="1.6" height="5.5" fill="#d9deec"/>
</svg>
<div class="a t" style="left:759px;top:430px;font-size:21px;color:#dfe4f0;font-weight:bold;letter-spacing:4px">溜溜自学</div>
<div class="a t" style="left:760px;top:456px;font-size:9px;color:#dfe4f0;letter-spacing:1.9px">zixue.3d66.COM</div>
<svg class="a" style="left:817px;top:453px" width="46" height="36" viewBox="0 0 46 36">
  <path fill-rule="evenodd" d="M5 1 H39 Q44 1 44 6 V36 H0 V6 Q0 1 5 1z M5 5 V34 H39 V5z" fill="#5c5c5c" fill-opacity="0.92"/>
  <text x="6" y="21" style="font-family:'Liberation Sans';font-weight:bold;font-size:15px" fill="#5c5c5c" stroke="#5c5c5c" stroke-width="0.8">AI</text>
  <path d="M5 36 V25 Q12 22 19 24 Q25 25 28 21 Q31 16 35 17 Q38 18 39 22 V36z" fill="#5c5c5c"/>
</svg>
<div class="a t" style="left:864px;top:466px;font-size:13px;color:rgba(60,60,60,0.45);font-weight:bold">标识</div>
</div></body></html>
